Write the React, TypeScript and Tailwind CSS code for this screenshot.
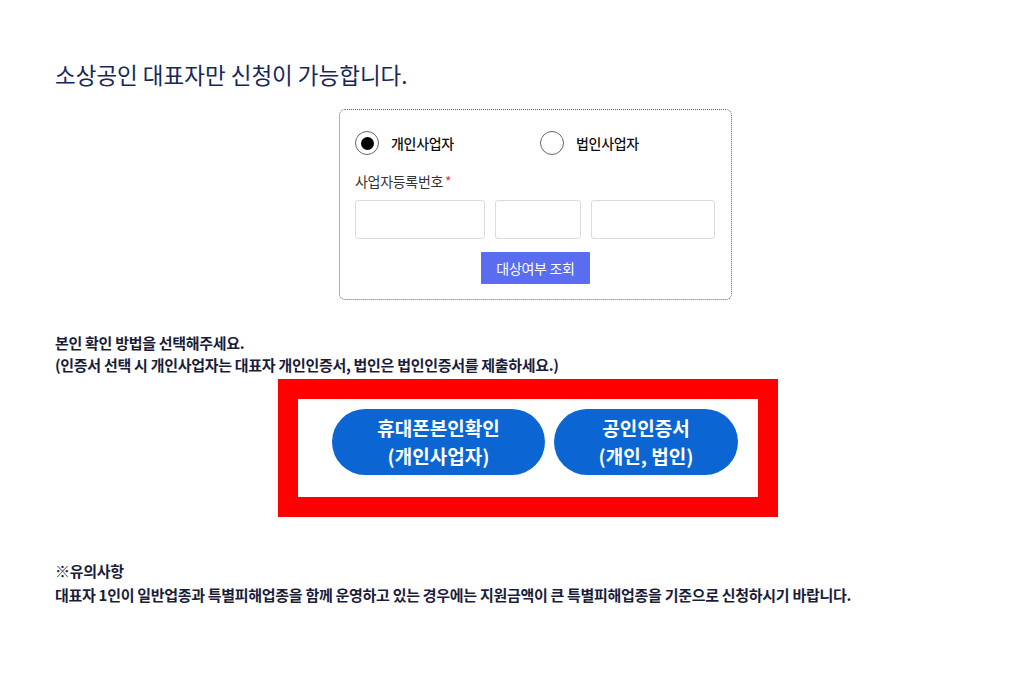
import React from "react";

const font = { fontFamily: '"Noto Sans CJK KR", "Noto Sans", sans-serif' };

function Radio({ checked, label }: { checked?: boolean; label: string }) {
  return (
    <div className="flex items-center">
      <div className="w-[24px] h-[24px] rounded-full border border-[#666] flex items-center justify-center bg-white">
        {checked && <div className="w-[13px] h-[13px] rounded-full bg-black" />}
      </div>
      <span className="ml-[12px] text-[14px] text-[#111] tracking-[-0.3px] font-medium">{label}</span>
    </div>
  );
}

export default function App() {
  return (
    <div className="w-[1018px] h-[681px] bg-white relative" style={font}>
      <div className="pl-[55px] pt-[58px]">
        <h1 className="text-[22.5px] leading-[32px] text-[#16285a] font-normal">
          소상공인 대표자만 신청이 가능합니다.
        </h1>
      </div>

      <div className="ml-[339px] mt-[19px] w-[393px] h-[191px] border border-dotted border-[#1a6fe0] rounded-[6px] px-[15px] pt-[21px]">
        <div className="flex">
          <div className="w-[185px]">
            <Radio checked label="개인사업자" />
          </div>
          <Radio label="법인사업자" />
        </div>
        <div className="mt-[16px] text-[14px] leading-[20px] text-[#333] tracking-[-0.3px]">
          사업자등록번호<span className="text-[#e53935] ml-[2px]">*</span>
        </div>
        <div className="flex gap-[10px] mt-[9px]">
          <div className="w-[130px] h-[39px] border border-[#dcdcdc] rounded-[3px]" />
          <div className="w-[86px] h-[39px] border border-[#dcdcdc] rounded-[3px]" />
          <div className="w-[124px] h-[39px] border border-[#dcdcdc] rounded-[3px]" />
        </div>
        <div className="flex justify-center mt-[13px]">
          <div className="w-[109px] h-[32px] bg-[#5a6cf0] rounded-[1px] flex items-center justify-center text-white text-[14px] tracking-[-0.3px]">
            대상여부 조회
          </div>
        </div>
      </div>

      <div className="pl-[55px] mt-[32px] text-[15px] leading-[22px] text-[#1a1d3a] font-semibold tracking-[-0.3px]">
        <p>본인 확인 방법을 선택해주세요.</p>
        <p>(인증서 선택 시 개인사업자는 대표자 개인인증서, 법인은 법인인증서를 제출하세요.)</p>
      </div>

      <div className="ml-[278px] mt-[3px] w-[500px] h-[138px] border-[20px] border-[#ff0000] bg-white flex pl-[34px] pt-[10px] gap-[9px]">
        <div className="w-[213px] h-[66px] rounded-full bg-[#0b66d4] text-white flex flex-col items-center justify-center text-[19px] leading-[28px] font-semibold">
          <span>휴대폰본인확인</span>
          <span>(개인사업자)</span>
        </div>
        <div className="w-[184px] h-[66px] rounded-full bg-[#0b66d4] text-white flex flex-col items-center justify-center text-[19px] leading-[28px] font-semibold">
          <span>공인인증서</span>
          <span>(개인, 법인)</span>
        </div>
      </div>

      <div className="pl-[55px] mt-[42px] text-[15px] leading-[24px] text-[#1a1d3a] font-semibold tracking-[-0.3px]">
        <p>※유의사항</p>
        <p>대표자 1인이 일반업종과 특별피해업종을 함께 운영하고 있는 경우에는 지원금액이 큰 특별피해업종을 기준으로 신청하시기 바랍니다.</p>
      </div>
    </div>
  );
}
